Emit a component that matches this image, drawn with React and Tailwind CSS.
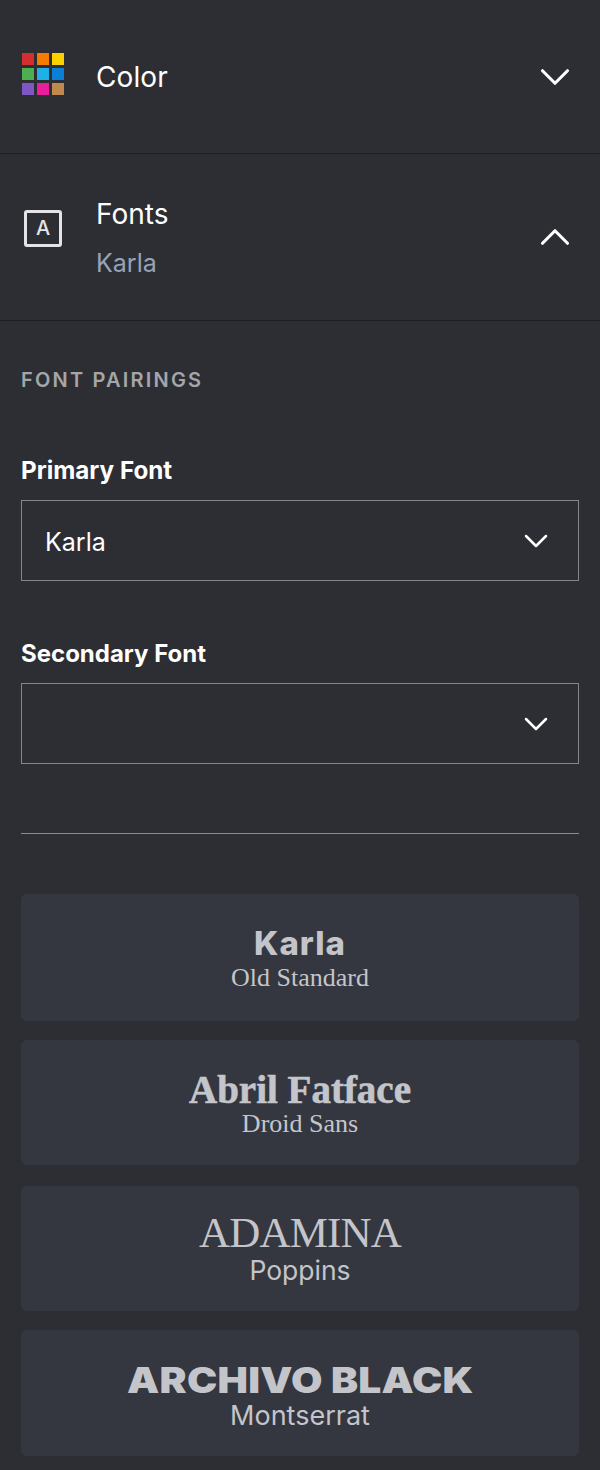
import React from "react";
import { ChevronDown, ChevronUp } from "lucide-react";

const swatches = ["#d32f2f", "#f57c00", "#fdd000", "#4caf50", "#1fb0e8", "#0a7fd6", "#7e57c2", "#e91e9c", "#c08a4e"];

const pairings = [
  {
    box: "h-[127px] pt-[3px]",
    top: "Karla",
    topClass: "font-['Inter'] font-extrabold text-[33px] leading-[38px] tracking-[1px]",
    bottom: "Old Standard",
    bottomClass: "font-['Liberation_Serif'] text-[26px] leading-[32px]",
  },
  {
    box: "h-[125px] pt-[5px]",
    top: "Abril Fatface",
    topClass: "font-['Liberation_Serif'] font-bold text-[39px] leading-[38px] [-webkit-text-stroke:0.6px_#c4c5ca]",
    bottom: "Droid Sans",
    bottomClass: "font-['Liberation_Serif'] text-[26px] leading-[30px]",
  },
  {
    box: "h-[125px] mt-[2px] pt-[3px]",
    top: "ADAMINA",
    topClass: "font-['Liberation_Serif'] text-[43px] leading-[40px] tracking-[-0.8px]",
    bottom: "Poppins",
    bottomClass: "font-['Inter'] text-[26.5px] leading-[34px]",
  },
  {
    box: "h-[126px] pt-[3px]",
    top: "ARCHIVO BLACK",
    topClass: "font-['Inter'] font-black text-[35px] leading-[40px] tracking-[0.2px] scale-x-[1.16] mt-[2px]",
    bottom: "Montserrat",
    bottomClass: "font-['Inter'] text-[27px] leading-[32px]",
  },
];

const Select = ({ value }) => (
  <div className="flex h-[81px] items-center justify-between border border-[#85868a] pl-[23px] pr-[22px]">
    <span className="pt-[5px] text-[25px] text-white">{value}</span>
    <ChevronDown size={40} className="text-white" strokeWidth={1.5} />
  </div>
);

const App = () => {
  return (
    <div className="h-[1470px] w-[600px] overflow-hidden bg-[#2d2e33] font-['Inter',sans-serif]">
      <div className="flex h-[154px] items-center justify-between border-b border-[#1d1e21] pl-[22px] pr-5">
        <div className="flex items-center gap-8">
          <div className="mb-[5px] grid w-[42px] grid-cols-3 gap-[3px]">
            {swatches.map((c) => (
              <span key={c} className="h-3 w-3" style={{ backgroundColor: c }} />
            ))}
          </div>
          <span className="text-[28px] tracking-[0.1px] text-white">Color</span>
        </div>
        <ChevronDown size={50} className="text-white" strokeWidth={1.5} />
      </div>

      <div className="flex h-[167px] items-center justify-between border-b border-[#1d1e21] pl-6 pr-5">
        <div className="flex items-start gap-[34px]">
          <div className="mt-[12px] flex h-[37px] w-[38px] items-center justify-center rounded-[3px] border-[3px] border-[#e4e4e6]">
            <span className="text-[20px] font-medium leading-none text-[#e4e4e6]">A</span>
          </div>
          <div className="flex flex-col gap-[19px]">
            <span className="text-[28px] leading-8 text-white">Fonts</span>
            <span className="text-[25px] leading-7 text-[#97a3b8]">Karla</span>
          </div>
        </div>
        <ChevronUp size={50} className="text-white" strokeWidth={1.5} />
      </div>

      <div className="px-[21px] pt-[47px]">
        <div className="text-[20px] font-semibold leading-6 tracking-[2.2px] text-[#a4a6aa]">FONT PAIRINGS</div>

        <div className="mt-[65px] text-[24.2px] font-bold leading-7 text-white">Primary Font</div>
        <div className="mt-[15px]">
          <Select value="Karla" />
        </div>

        <div className="mt-[59px] text-[24px] font-bold leading-7 text-white">Secondary Font</div>
        <div className="mt-[15px]">
          <Select value="" />
        </div>

        <div className="mt-[69px] h-px bg-[#8a8b8f]" />

        <div className="mt-[60px] flex flex-col gap-[19px]">
          {pairings.map((p) => (
            <div
              key={p.top}
              className={`flex flex-col items-center justify-center rounded-md bg-[#343740] text-[#c4c5ca] ${p.box}`}
            >
              <span className={p.topClass}>{p.top}</span>
              <span className={p.bottomClass}>{p.bottom}</span>
            </div>
          ))}
        </div>
      </div>
    </div>
  );
};

export default App;
